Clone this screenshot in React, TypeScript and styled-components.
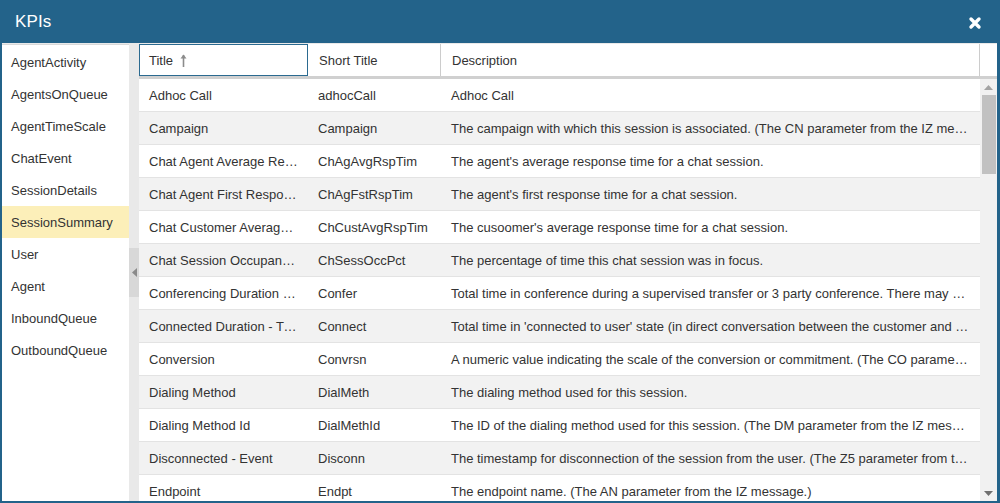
import React from 'react';
import styled, { createGlobalStyle } from 'styled-components';

const GlobalStyle = createGlobalStyle`
  html, body {
    margin: 0;
    padding: 0;
    background: #ffffff;
  }
  body {
    font-family: "Liberation Sans", Arial, sans-serif;
  }
  * {
    box-sizing: border-box;
  }
`;

const Window = styled.div`
  width: 1000px;
  height: 503px;
  display: flex;
  flex-direction: column;
  background: #23638a;
  padding: 0 3px 2px 2px;
  overflow: hidden;
`;

const TitleBar = styled.div`
  height: 43px;
  flex: none;
  display: flex;
  align-items: center;
  justify-content: space-between;
  padding: 0 15px 0 13px;
  color: #ffffff;
`;

const Heading = styled.h1`
  margin: 0;
  font-size: 17px;
  font-weight: normal;
  letter-spacing: 0.1px;
`;

const CloseButton = styled.button`
  border: none;
  background: none;
  padding: 0;
  width: 14px;
  height: 14px;
  display: flex;
  cursor: pointer;
  margin-top: 2px;
`;

const Body = styled.div`
  flex: 1;
  min-height: 0;
  display: flex;
  background: #e9e9e9;
  padding-top: 1px;
`;

const Sidebar = styled.ul`
  width: 127px;
  flex: none;
  margin: 0;
  padding: 1px 0 0;
  list-style: none;
  background: #ffffff;
  border-top: 1px solid #d9d9d9;
`;

const SideItem = styled.li<{ $active?: boolean }>`
  height: 32px;
  display: flex;
  align-items: center;
  padding-left: 9px;
  font-size: 13px;
  color: #333333;
  background: ${p => (p.$active ? '#fcefb9' : 'transparent')};
  cursor: pointer;
`;

const Gutter = styled.div`
  width: 10px;
  flex: none;
  display: flex;
  align-items: center;
`;

const Handle = styled.div`
  width: 10px;
  height: 49px;
  background: #d8d8d8;
  display: flex;
  align-items: center;
  justify-content: center;
`;

const Grid = styled.div`
  flex: 1;
  min-width: 0;
  display: flex;
  flex-direction: column;
  background: #ffffff;
`;

const HeaderRow = styled.div`
  height: 35px;
  flex: none;
  display: grid;
  grid-template-columns: 169px 133px 1fr 17px;
  border-bottom: 3px solid #d0d0d0;
`;

const HeaderCell = styled.div<{ $focused?: boolean; $last?: boolean }>`
  display: flex;
  align-items: center;
  gap: 7px;
  padding-left: ${p => (p.$focused ? '9px' : '11px')};
  font-size: 13px;
  color: #333333;
  border: ${p => (p.$focused ? '1px solid #2b6a90' : 'none')};
  border-right: ${p => (p.$focused ? '1px solid #2b6a90' : p.$last ? 'none' : '1px solid #cccccc')};
`;

const Viewport = styled.div`
  flex: 1;
  min-height: 0;
  display: flex;
`;

const Rows = styled.div`
  flex: 1;
  min-width: 0;
  overflow: hidden;
`;

const Row = styled.div<{ $alt: boolean }>`
  height: 33px;
  display: grid;
  grid-template-columns: 169px 133px minmax(0, 1fr);
  align-items: center;
  background: ${p => (p.$alt ? '#f2f2f2' : '#ffffff')};
  border-bottom: 1px solid #e3e3e3;
`;

const Cell = styled.div`
  padding: 0 10px 0 10px;
  font-size: 13px;
  color: #333333;
  white-space: nowrap;
  overflow: hidden;
  text-overflow: ellipsis;
`;

const Scrollbar = styled.div`
  width: 17px;
  flex: none;
  display: flex;
  flex-direction: column;
  align-items: center;
  background: #f1f1f1;
`;

const ScrollArrow = styled.div`
  height: 16px;
  width: 17px;
  display: flex;
  align-items: center;
  justify-content: center;
  flex: none;
`;

const Track = styled.div`
  flex: 1;
  width: 100%;
  padding: 0 1px 0 2px;
`;

const Thumb = styled.div`
  height: 79px;
  background: #c1c1c1;
`;

const tables = [
  'AgentActivity',
  'AgentsOnQueue',
  'AgentTimeScale',
  'ChatEvent',
  'SessionDetails',
  'SessionSummary',
  'User',
  'Agent',
  'InboundQueue',
  'OutboundQueue',
];

const kpis: [string, string, string][] = [
  ['Adhoc Call', 'adhocCall', 'Adhoc Call'],
  ['Campaign', 'Campaign', 'The campaign with which this session is associated. (The CN parameter from the IZ message.)'],
  ['Chat Agent Average Response Time', 'ChAgAvgRspTim', "The agent's average response time for a chat session."],
  ['Chat Agent First Response Time', 'ChAgFstRspTim', "The agent's first response time for a chat session."],
  ['Chat Customer Average Response Time', 'ChCustAvgRspTim', "The cusoomer's average response time for a chat session."],
  ['Chat Session Occupancy Percentage', 'ChSessOccPct', 'The percentage of time this chat session was in focus.'],
  ['Conferencing Duration - Time', 'Confer', 'Total time in conference during a supervised transfer or 3 party conference. There may be more than one.'],
  ['Connected Duration - Time', 'Connect', "Total time in 'connected to user' state (in direct conversation between the customer and an agent)."],
  ['Conversion', 'Convrsn', 'A numeric value indicating the scale of the conversion or commitment. (The CO parameter from the IZ message.)'],
  ['Dialing Method', 'DialMeth', 'The dialing method used for this session.'],
  ['Dialing Method Id', 'DialMethId', 'The ID of the dialing method used for this session. (The DM parameter from the IZ message.)'],
  ['Disconnected - Event', 'Disconn', 'The timestamp for disconnection of the session from the user. (The Z5 parameter from the IZ message.)'],
  ['Endpoint', 'Endpt', 'The endpoint name. (The AN parameter from the IZ message.)'],
  ['Entry Point', 'EntryPt', 'The entry point of the session.'],
];

const App: React.FC = () => {
  return (
    <>
      <GlobalStyle />
      <Window>
        <TitleBar>
          <Heading>KPIs</Heading>
          <CloseButton aria-label="Close">
            <svg width="14" height="14" viewBox="0 0 14 14">
              <path d="M3 3 L11 11 M11 3 L3 11" stroke="#ffffff" strokeWidth="3.4" strokeLinecap="round" />
            </svg>
          </CloseButton>
        </TitleBar>
        <Body>
          <Sidebar>
            {tables.map(t => (
              <SideItem key={t} $active={t === 'SessionSummary'}>
                {t}
              </SideItem>
            ))}
          </Sidebar>
          <Gutter>
            <Handle>
              <svg width="5" height="9" viewBox="0 0 5 9">
                <path d="M5 0 L0 4.5 L5 9 Z" fill="#8a8a8a" />
              </svg>
            </Handle>
          </Gutter>
          <Grid>
            <HeaderRow>
              <HeaderCell $focused>
                Title
                <svg width="7" height="13" viewBox="0 0 7 13">
                  <path d="M3.5 1 L3.5 13" stroke="#8c8c8c" strokeWidth="1.6" />
                  <path d="M0.5 4.5 L3.5 0.5 L6.5 4.5 Z" fill="#8c8c8c" />
                </svg>
              </HeaderCell>
              <HeaderCell>Short Title</HeaderCell>
              <HeaderCell>Description</HeaderCell>
              <HeaderCell $last />
            </HeaderRow>
            <Viewport>
              <Rows>
                {kpis.map(([title, short, desc], i) => (
                  <Row key={short} $alt={i % 2 === 1}>
                    <Cell>{title}</Cell>
                    <Cell>{short}</Cell>
                    <Cell>{desc}</Cell>
                  </Row>
                ))}
              </Rows>
              <Scrollbar>
                <ScrollArrow>
                  <svg width="9" height="5" viewBox="0 0 9 5">
                    <path d="M0 5 L4.5 0 L9 5 Z" fill="#a3a3a3" />
                  </svg>
                </ScrollArrow>
                <Track>
                  <Thumb />
                </Track>
                <ScrollArrow>
                  <svg width="9" height="5" viewBox="0 0 9 5">
                    <path d="M0 0 L4.5 5 L9 0 Z" fill="#6f6f6f" />
                  </svg>
                </ScrollArrow>
              </Scrollbar>
            </Viewport>
          </Grid>
        </Body>
      </Window>
    </>
  );
};

export default App;
